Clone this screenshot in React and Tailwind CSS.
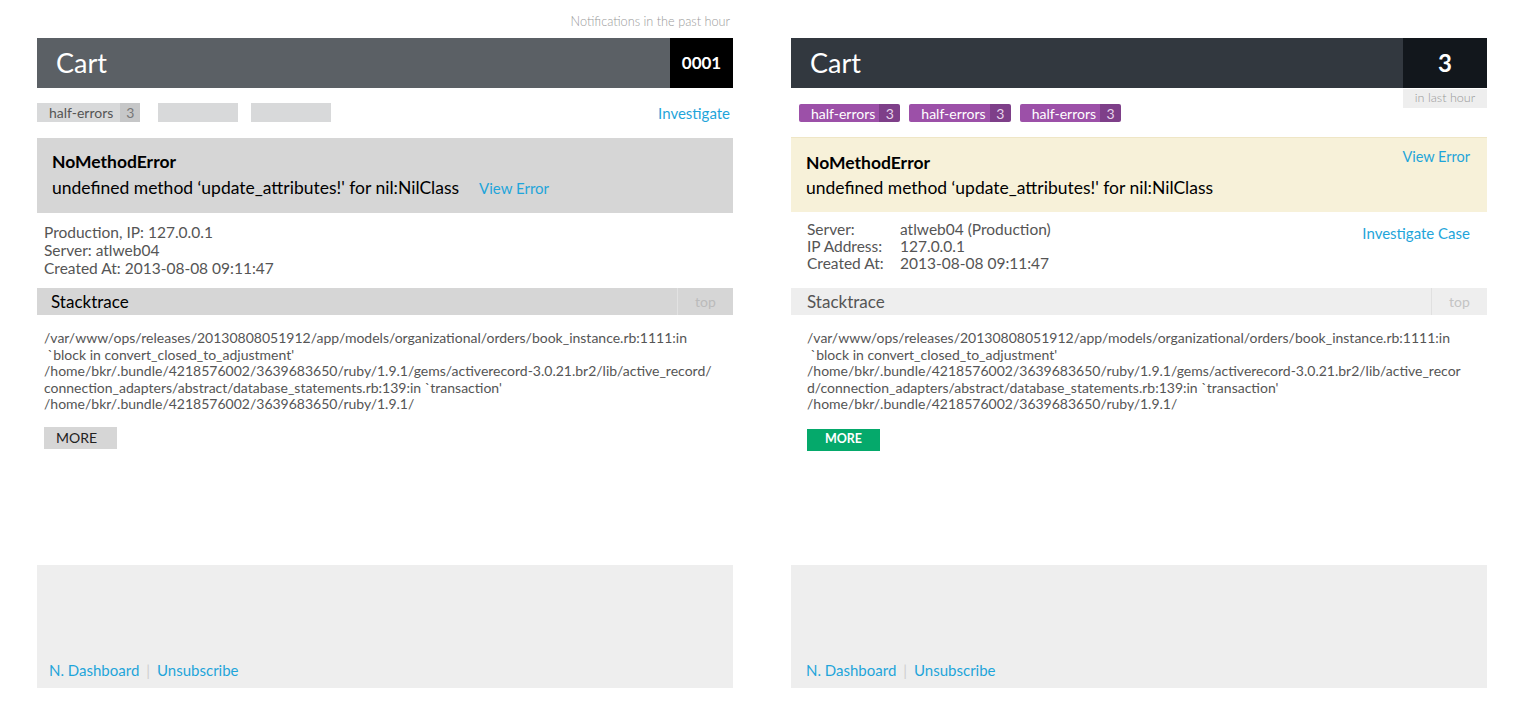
import React from "react";

const font = { fontFamily: "Lato, 'Open Sans', sans-serif" };

function Footer({ pad }) {
  return (
    <div className={`mt-auto h-[123px] bg-[#eeeeee] flex items-end pb-[7px] ${pad} text-[15px] text-[#1fa5da]`}>
      <a href="#">N. Dashboard</a>
      <span className="mx-[7px] text-[#cfcfcf]">|</span>
      <a href="#">Unsubscribe</a>
    </div>
  );
}

function LeftPanel() {
  return (
    <div className="w-[696px] flex flex-col h-[688px]">
      <div className="h-[38px] flex items-end justify-end pb-[7px] pr-[3px] text-[12.7px] font-light text-[#9a9a9a]">
        Notifications in the past hour
      </div>
      <div className="h-[50px] bg-[#5b6065] flex items-center">
        <div className="flex-1 pl-[19px] text-[27px] text-white">Cart</div>
        <div className="w-[63px] h-full bg-black flex items-center justify-center text-[17px] font-bold text-white">0001</div>
      </div>
      <div className="mt-[15px] h-[19px] flex items-center">
        <div className="flex h-full">
          <span className="bg-[#d8d9da] pl-[12px] pr-[7px] flex items-center text-[14px] text-[#555]">half-errors</span>
          <span className="bg-[#c6c7c8] w-[20px] flex items-center justify-center text-[14px] text-[#777]">3</span>
        </div>
        <div className="ml-[18px] w-[80px] h-full bg-[#d8d9da]" />
        <div className="ml-[13px] w-[80px] h-full bg-[#d8d9da]" />
        <a href="#" className="ml-auto mr-[3px] pt-[1px] text-[15px] text-[#1fa5da]">Investigate</a>
      </div>
      <div className="mt-[16px] h-[75px] bg-[#d6d6d6] pl-[15px] pt-[13px]">
        <div className="text-[17.5px] font-bold text-black leading-[22px]">NoMethodError</div>
        <div className="mt-[4px] text-[17.5px] text-black leading-[22px]">
          undefined method ‘update_attributes!' for nil:NilClass
          <a href="#" className="ml-[20px] text-[15px] text-[#1fa5da]">View Error</a>
        </div>
      </div>
      <div className="mt-[10px] pl-[7px] text-[15.5px] leading-[18px] text-[#555]">
        <div>Production, IP: 127.0.0.1</div>
        <div>Server: atlweb04</div>
        <div>Created At: 2013-08-08 09:11:47</div>
      </div>
      <div className="mt-[11px] h-[27px] bg-[#d6d6d6] flex items-center">
        <div className="flex-1 pl-[14px] text-[17px] text-black">Stacktrace</div>
        <div className="w-[56px] h-full border-l border-[#e2e2e2] flex items-center justify-center text-[14px] text-[#bbbbbb]">top</div>
      </div>
      <div className="mt-[15px] pl-[7px] text-[14px] leading-[16.5px] text-[#555]">
        /var/www/ops/releases/20130808051912/app/models/organizational/orders/book_instance.rb:1111:in<br />
        &nbsp;`block in convert_closed_to_adjustment'<br />
        /home/bkr/.bundle/4218576002/3639683650/ruby/1.9.1/gems/activerecord-3.0.21.br2/lib/active_record/<br />
        connection_adapters/abstract/database_statements.rb:139:in `transaction'<br />
        /home/bkr/.bundle/4218576002/3639683650/ruby/1.9.1/
      </div>
      <div className="mt-[14px] ml-[7px] w-[73px] h-[22px] bg-[#d6d6d6] flex items-center pl-[12px] text-[14px] text-[#222]">MORE</div>
      <Footer pad="pl-[12px]" />
    </div>
  );
}

function Tag() {
  return (
    <div className="flex h-[18px] rounded-[2px] overflow-hidden">
      <span className="bg-[#9c50a8] pl-[12px] pr-[4px] flex items-center text-[14px] text-white">half-errors</span>
      <span className="bg-[#7e3f89] w-[21px] flex items-center justify-center text-[14px] text-[#e6d3ea]">3</span>
    </div>
  );
}

function RightPanel() {
  return (
    <div className="w-[696px] flex flex-col h-[688px]">
      <div className="h-[38px]" />
      <div className="h-[50px] bg-[#32383f] flex items-center">
        <div className="flex-1 pl-[19px] text-[27px] text-white">Cart</div>
        <div className="w-[84px] h-full bg-[#12171c] flex items-center justify-center text-[24px] font-bold text-white">3</div>
      </div>
      <div className="relative h-[49px]">
        <div className="absolute right-0 top-[1px] w-[84px] h-[19px] bg-[#eeeeee] flex items-center justify-center text-[12.6px] font-light text-[#999]">in last hour</div>
        <div className="pt-[16px] pl-[8px] flex gap-[9px]">
          <Tag />
          <Tag />
          <Tag />
        </div>
      </div>
      <div className="h-[75px] bg-[#f7f1d9] border-t border-[#efe6c6] pl-[15px] pr-[17px] pt-[10px] flex">
        <div className="flex-1 pt-[4px]">
          <div className="text-[17.5px] font-bold text-black leading-[22px]">NoMethodError</div>
          <div className="mt-[3px] text-[17.5px] text-black leading-[22px]">undefined method ‘update_attributes!' for nil:NilClass</div>
        </div>
        <a href="#" className="text-[14.5px] text-[#1fa5da] leading-[18px]">View Error</a>
      </div>
      <div className="mt-[9px] pl-[16px] pr-[17px] flex text-[15.5px] leading-[17px] text-[#555]">
        <div className="flex-1 grid grid-cols-[93px_1fr]">
          <div>Server:</div>
          <div>atlweb04 (Production)</div>
          <div>IP Address:</div>
          <div>127.0.0.1</div>
          <div>Created At:</div>
          <div>2013-08-08 09:11:47</div>
        </div>
        <a href="#" className="mt-[3px] text-[15px] text-[#1fa5da] leading-[18px] self-start">Investigate Case</a>
      </div>
      <div className="mt-[16px] h-[27px] bg-[#eeeeee] flex items-center">
        <div className="flex-1 pl-[16px] text-[17px] text-[#555]">Stacktrace</div>
        <div className="w-[56px] h-full border-l border-[#e0e0e0] flex items-center justify-center text-[14px] text-[#c4c4c4]">top</div>
      </div>
      <div className="mt-[15px] pl-[16px] text-[14px] leading-[16.5px] text-[#555]">
        /var/www/ops/releases/20130808051912/app/models/organizational/orders/book_instance.rb:1111:in<br />
        &nbsp;`block in convert_closed_to_adjustment'<br />
        /home/bkr/.bundle/4218576002/3639683650/ruby/1.9.1/gems/activerecord-3.0.21.br2/lib/active_recor<br />
        d/connection_adapters/abstract/database_statements.rb:139:in `transaction'<br />
        /home/bkr/.bundle/4218576002/3639683650/ruby/1.9.1/
      </div>
      <div className="mt-[16px] ml-[16px] w-[73px] h-[22px] bg-[#05a96b] flex items-center justify-center text-[12.5px] font-bold text-white">MORE</div>
      <Footer pad="pl-[15px]" />
    </div>
  );
}

export default function App() {
  return (
    <div className="min-h-[720px] bg-white flex gap-[58px] pl-[37px]" style={font}>
      <LeftPanel />
      <RightPanel />
    </div>
  );
}
